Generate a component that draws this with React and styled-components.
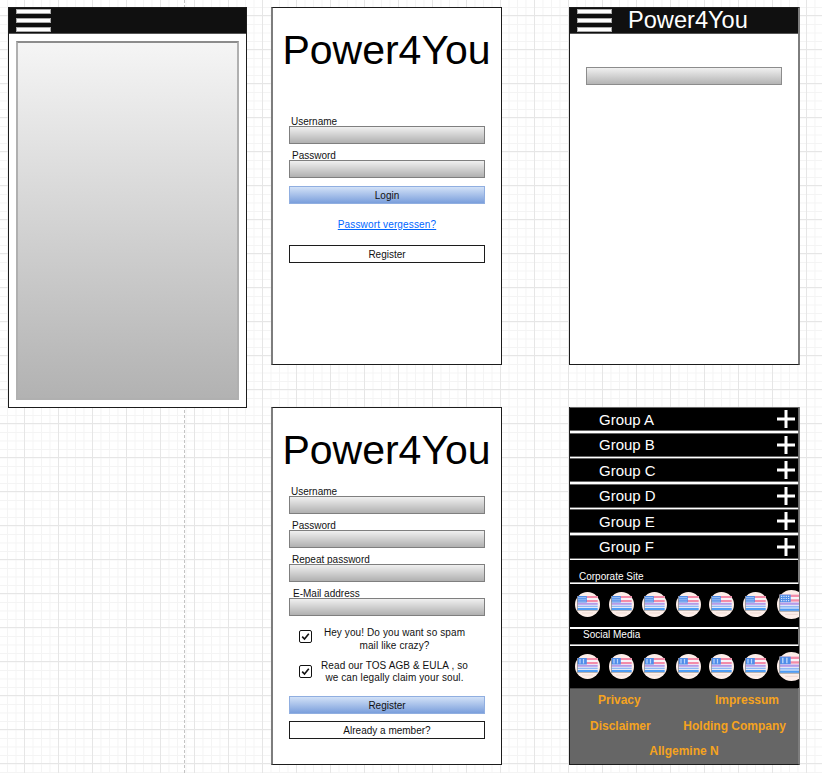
import React from "react";
import styled, { createGlobalStyle } from "styled-components";

const Global = createGlobalStyle`
  html, body {
    margin: 0;
    padding: 0;
    background: #fff;
  }
  body {
    font-family: "Liberation Sans", Arial, sans-serif;
  }
`;

// draw.io style grid paper, the screens lie free on it
const Canvas = styled.div`
  position: relative;
  width: 822px;
  height: 773px;
  overflow: hidden;
  background-color: #fff;
  background-image:
    linear-gradient(to right, #e6e6e6 1px, transparent 1px),
    linear-gradient(to bottom, #e6e6e6 1px, transparent 1px),
    linear-gradient(to right, #f4f4f4 1px, transparent 1px),
    linear-gradient(to bottom, #f4f4f4 1px, transparent 1px);
  background-size: 34px 34px, 34px 34px, 8.5px 8.5px, 8.5px 8.5px;
  background-position: 24px 0, 0 15px, 7px 0, 0 7px;
`;

const Guide = styled.div`
  position: absolute;
  left: 184px;
  top: 0;
  bottom: 0;
  border-left: 1px dashed #c4c4c4;
`;

const Frame = styled.section`
  position: absolute;
  left: ${(p) => p.$x}px;
  top: ${(p) => p.$y}px;
  width: ${(p) => p.$w}px;
  height: ${(p) => p.$h}px;
  box-sizing: border-box;
  display: flex;
  flex-direction: column;
  background: #fff;
  border: 1px solid #1c1c1c;
  border-top: ${(p) => (p.$flush ? "none" : "1px solid #1c1c1c")};
  border-left: ${(p) => (p.$thick === "left" ? "2px solid #7d7d7d" : "1px solid #1c1c1c")};
  border-right: ${(p) => (p.$thick === "right" ? "2px solid #7d7d7d" : "1px solid #1c1c1c")};
`;

const Header = styled.header`
  flex: none;
  height: 26px;
  box-sizing: border-box;
  display: flex;
  align-items: center;
  gap: 16px;
  padding-left: 7px;
  background: #101010;
  border-bottom: 1px solid #555;
`;

const Burger = styled.div`
  width: 35px;
  display: flex;
  flex-direction: column;
  gap: 4px;
`;

const BurgerBar = styled.span`
  display: block;
  height: 5px;
  box-sizing: border-box;
  background: #fff;
  border: 1px solid #aaa;
`;

const HeaderTitle = styled.div`
  color: #fff;
  font-size: 23.6px;
  line-height: 24px;
  height: 26px;
`;

const PreviewBox = styled.div`
  flex: 1;
  margin: 7px;
  box-sizing: border-box;
  border: 2px solid #b0b0b0;
  border-top-color: #8c8c8c;
  background: linear-gradient(to bottom, #f5f5f5, #b2b2b2);
`;

const SearchBar = styled.div`
  margin: 33px 16px 0 16px;
  height: 18px;
  box-sizing: border-box;
  border: 1px solid #8c8c8c;
  background: linear-gradient(to bottom, #f0f0f0, #b4b4b4);
`;

const Title = styled.h1`
  margin: ${(p) => p.$top}px 0 ${(p) => p.$bottom}px 0;
  font-size: 41px;
  font-weight: 400;
  line-height: 46px;
  text-align: center;
  color: #000;
  padding-right: 1px;
`;

const Form = styled.div`
  display: flex;
  flex-direction: column;
  padding: 0 16px 0 16px;
`;

const Field = styled.div`
  display: flex;
  flex-direction: column;
  margin-bottom: ${(p) => p.$gap || 6}px;
`;

const FieldLabel = styled.label`
  font-size: 10px;
  line-height: 12px;
  height: 10px;
  color: #111;
  padding-left: ${(p) => p.$indent}px;
`;

const Input = styled.div`
  height: 18px;
  box-sizing: border-box;
  border: 1px solid #7f7f7f;
  background: linear-gradient(to bottom, #f0f0f0, #b0b0b0);
`;

const Button = styled.button`
  display: block;
  width: 100%;
  height: 18px;
  padding: 0;
  box-sizing: border-box;
  font-family: inherit;
  font-size: 10px;
  color: #111;
  border: 1px solid ${(p) => (p.$primary ? "#90aee0" : "#1c1c1c")};
  background: ${(p) =>
    p.$primary ? "linear-gradient(to bottom, #d2e1f7, #7b9fdc)" : "#fff"};
  margin-top: ${(p) => p.$top || 0}px;
`;

const ForgotLink = styled.a`
  display: block;
  margin: 15px 0 14px 0;
  text-align: center;
  font-size: 10px;
  line-height: 12px;
  letter-spacing: 0.15px;
  color: #0066ff;
  text-decoration: underline;
`;

const CheckRow = styled.div`
  display: flex;
  align-items: center;
  height: ${(p) => p.$h}px;
  margin-bottom: ${(p) => p.$gap}px;
  padding-left: 10px;
`;

const CheckBox = styled.span`
  flex: none;
  width: 13px;
  height: 13px;
  box-sizing: border-box;
  display: flex;
  align-items: center;
  justify-content: center;
  border: 1px solid #111;
  border-radius: 2px;
  background: #fff;
  position: relative;
  top: ${(p) => p.$lift}px;
`;

const CheckText = styled.div`
  flex: 1;
  text-align: center;
  font-size: 10px;
  line-height: ${(p) => p.$line}px;
  letter-spacing: 0.1px;
  color: #111;
  padding-right: 8px;
`;

const GroupRow = styled.div`
  flex: none;
  height: 24px;
  width: 229px;
  box-sizing: border-box;
  margin-bottom: 1.5px;
  display: flex;
  align-items: center;
  justify-content: space-between;
  padding: 0 3px 0 29px;
  background: #000;
  border-top: 1px solid #666;
  border-right: 1px solid #666;
  border-bottom: 1px solid #666;
  color: #fff;
  font-size: 15px;
`;

const Bar = styled.div`
  flex: none;
  height: ${(p) => p.$h}px;
  box-sizing: border-box;
  margin-bottom: 1px;
  padding: ${(p) => p.$pad}px 0 0 ${(p) => p.$indent}px;
  background: #000;
  color: #fff;
  font-size: 10px;
  line-height: 10px;
  border-bottom: 1px solid #999;
`;

const FlagPanel = styled.div`
  flex: none;
  height: ${(p) => p.$h}px;
  width: 229px;
  box-sizing: border-box;
  display: flex;
  align-items: center;
  gap: 8.6px;
  padding: 0 0 ${(p) => p.$lift}px 5px;
  overflow: hidden;
  background: #000;
  margin-bottom: ${(p) => p.$gap}px;
`;

const FlagIcon = styled.svg`
  flex: none;
  width: ${(p) => (p.$big ? 29 : 25)}px;
  height: ${(p) => (p.$big ? 29 : 25)}px;
`;

const Footer = styled.footer`
  flex: 1;
  display: flex;
  flex-direction: column;
  background: #666;
  border-top: 1px solid #444;
  color: #f5a31e;
  font-size: 12px;
  font-weight: 700;
`;

const FooterRow = styled.div`
  flex: none;
  display: flex;
  justify-content: ${(p) => (p.$center ? "center" : "space-between")};
  height: ${(p) => p.$h}px;
  align-items: center;
  padding: 0 ${(p) => p.$right}px 0 ${(p) => p.$left}px;
`;

const GROUPS = ["Group A", "Group B", "Group C", "Group D", "Group E", "Group F"];

const Hamburger = () => (
  <Burger>
    <BurgerBar />
    <BurgerBar />
    <BurgerBar />
  </Burger>
);

const Plus = () => (
  <svg width="18" height="18" viewBox="0 0 18 18">
    <path d="M0 9H18M9 0V18" stroke="#fff" strokeWidth="3" fill="none" />
  </svg>
);

const Check = () => (
  <svg width="9" height="9" viewBox="0 0 9 9">
    <path d="M1.2 4.6L3.5 7L7.8 1.8" stroke="#111" strokeWidth="1.6" fill="none" />
  </svg>
);

const Flag = ({ big, social }) => (
  <FlagIcon $big={big} viewBox="0 0 25 25">
    <circle cx="12.5" cy="12.5" r="12.5" fill="#fdeee9" />
    <rect x="2.3" y="4" width="20.4" height="14" fill="#f8f4f8" />
    <rect x="2.3" y="4" width="20.4" height="2" fill="#f48ca8" />
    <rect x="2.3" y="8" width="20.4" height="2" fill="#f48ca8" />
    <rect x="2.3" y="10.8" width="20.4" height="2" fill="#b39be8" />
    <rect x="2.3" y="13.6" width="20.4" height="1.6" fill="#8fb8f6" />
    <rect x="2.3" y="16" width="20.4" height="2" fill="#4f9df5" />
    <rect x="2.3" y="4" width="9.5" height="6.5" fill="#4f8dea" />
    {social ? (
      <path d="M5 5V9.6M8.5 5V9.6" stroke="#bcd6fb" strokeWidth="1.2" />
    ) : (
      <path d="M3.5 5.5H11M3.5 7.3H11M3.5 9.1H11" stroke="#dbe8fc" strokeWidth="1" strokeDasharray="1 1" />
    )}
    <rect x="2" y="4" width="0.7" height="14.4" fill="#8a8a8a" />
    <rect x="2" y="18" width="20.7" height="0.6" fill="#8a8a8a" />
    <rect x="7" y="20.5" width="11" height="1" fill="#f0dcd6" />
  </FlagIcon>
);

const FlagStrip = ({ height, lift, gap, social }) => (
  <FlagPanel $h={height} $lift={lift} $gap={gap}>
    {[0, 1, 2, 3, 4, 5].map((i) => (
      <Flag key={i} social={social} />
    ))}
    <Flag big social={social} />
  </FlagPanel>
);

const LabeledInput = ({ label, indent, gap }) => (
  <Field $gap={gap}>
    <FieldLabel $indent={indent}>{label}</FieldLabel>
    <Input />
  </Field>
);

const App = () => {
  return (
    <Canvas>
      <Global />
      <Guide />

      <Frame $x={8} $y={7} $w={239} $h={401}>
        <Header>
          <Hamburger />
        </Header>
        <PreviewBox />
      </Frame>

      <Frame $x={271} $y={7} $w={231} $h={358} $thick="left">
        <Title $top={19} $bottom={43}>Power4You</Title>
        <Form>
          <LabeledInput label="Username" indent={2} />
          <LabeledInput label="Password" indent={3} gap={8} />
          <Button $primary>Login</Button>
          <ForgotLink>Passwort vergessen?</ForgotLink>
          <Button>Register</Button>
        </Form>
      </Frame>

      <Frame $x={569} $y={7} $w={231} $h={358} $thick="right">
        <Header>
          <Hamburger />
          <HeaderTitle>Power4You</HeaderTitle>
        </Header>
        <SearchBar />
      </Frame>

      <Frame $x={271} $y={407} $w={231} $h={358} $thick="left">
        <Title $top={19} $bottom={13}>Power4You</Title>
        <Form>
          <LabeledInput label="Username" indent={2} />
          <LabeledInput label="Password" indent={3} />
          <LabeledInput label="Repeat password" indent={3} />
          <LabeledInput label="E-Mail address" indent={4} gap={9} />
          <CheckRow $h={28} $gap={6}>
            <CheckBox $lift={-3}>
              <Check />
            </CheckBox>
            <CheckText $line={13}>
              Hey you! Do you want so spam
              <br />
              mail like crazy?
            </CheckText>
          </CheckRow>
          <CheckRow $h={26} $gap={11}>
            <CheckBox $lift={-1}>
              <Check />
            </CheckBox>
            <CheckText $line={12}>
              Read our TOS AGB &amp; EULA , so
              <br />
              we can legally claim your soul.
            </CheckText>
          </CheckRow>
          <Button $primary>Register</Button>
          <Button $top={7}>Already a member?</Button>
        </Form>
      </Frame>

      <Frame $flush $x={569} $y={407} $w={231} $h={358} $thick="right">
        {GROUPS.map((name) => (
          <GroupRow key={name}>
            {name}
            <Plus />
          </GroupRow>
        ))}
        <Bar $h={23} $pad={12} $indent={9}>Corporate Site</Bar>
        <FlagStrip height={43} lift={3} gap={1.5} />
        <Bar $h={16} $pad={1} $indent={13}>Social Media</Bar>
        <FlagStrip height={42} lift={0} gap={0} social />
        <Footer>
          <FooterRow $h={23} $left={28} $right={19}>
            <span>Privacy</span>
            <span>Impressum</span>
          </FooterRow>
          <FooterRow $h={29} $left={20} $right={12}>
            <span>Disclaimer</span>
            <span>Holding Company</span>
          </FooterRow>
          <FooterRow $h={21} $center $left={0} $right={0}>
            <span>Allgemine N</span>
          </FooterRow>
        </Footer>
      </Frame>
    </Canvas>
  );
};

export default App;
